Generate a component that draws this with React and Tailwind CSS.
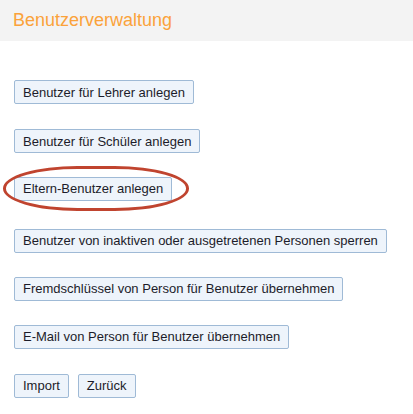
export default function App() {
  const btn =
    'h-[24px] px-[8px] border border-[#9fbad6] rounded-[2px] bg-[#eef4fb] text-[13px] leading-none text-[#1c1c2a] whitespace-nowrap'

  return (
    <div className="min-h-[414px] bg-white" style={{ fontFamily: '"Liberation Sans", Arial, sans-serif' }}>
      <div className="h-[41px] bg-[#f3f3f3] px-[13px] flex items-center">
        <h1 className="text-[18px] text-[#fba23a] font-normal">Benutzerverwaltung</h1>
      </div>

      <div className="pl-[14px] pt-[39px] flex flex-col items-start gap-[24px]">
        <button className={btn}>Benutzer für Lehrer anlegen</button>
        <button className={`${btn} mt-[1px]`}>Benutzer für Schüler anlegen</button>
        <div className="relative -mt-[1px] mb-[4px]">
          <button className={btn}>Eltern-Benutzer anlegen</button>
          <div className="absolute -left-[11px] -top-[10px] -right-[17px] -bottom-[10px] border-[3px] border-[#c0442f] rounded-[40%/50%]" />
        </div>
        <button className={btn}>Benutzer von inaktiven oder ausgetretenen Personen sperren</button>
        <button className={btn}>Fremdschlüssel von Person für Benutzer übernehmen</button>
        <button className={btn}>E-Mail von Person für Benutzer übernehmen</button>
        <div className="flex gap-[9px] mt-[1px]">
          <button className={btn}>Import</button>
          <button className={btn}>Zurück</button>
        </div>
      </div>
    </div>
  )
}
